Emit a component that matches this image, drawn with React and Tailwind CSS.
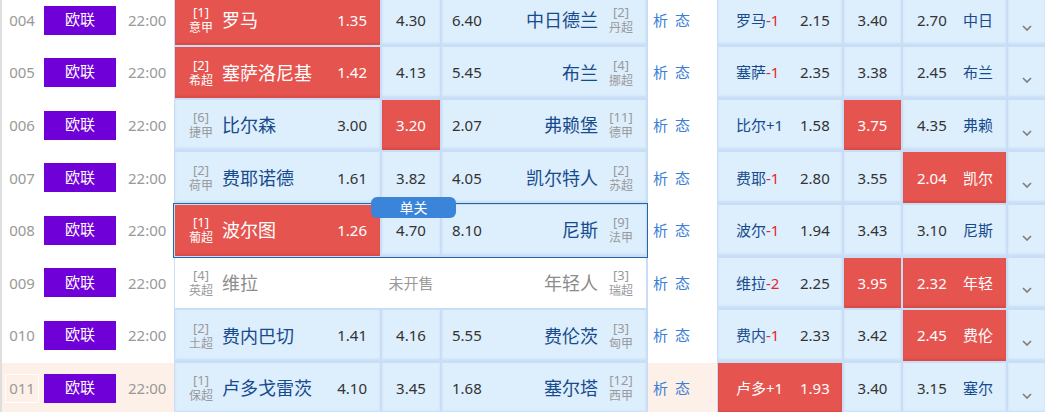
import React from "react";

const rows = [
  { no: "004", home: { rank: "[1]", lg: "意甲", name: "罗马", odds: "1.35" }, draw: "4.30", away: { odds: "6.40", name: "中日德兰", rank: "[2]", lg: "丹超" }, hl: "home",
    hc: { name: "罗马", h: "-1", odds: "2.15", draw: "3.40", aodds: "2.70", aname: "中日", hl: null } },
  { no: "005", home: { rank: "[2]", lg: "希超", name: "塞萨洛尼基", odds: "1.42" }, draw: "4.13", away: { odds: "5.45", name: "布兰", rank: "[4]", lg: "挪超" }, hl: "home",
    hc: { name: "塞萨", h: "-1", odds: "2.35", draw: "3.38", aodds: "2.45", aname: "布兰", hl: null } },
  { no: "006", home: { rank: "[6]", lg: "捷甲", name: "比尔森", odds: "3.00" }, draw: "3.20", away: { odds: "2.07", name: "弗赖堡", rank: "[11]", lg: "德甲" }, hl: "draw",
    hc: { name: "比尔", h: "+1", odds: "1.58", draw: "3.75", aodds: "4.35", aname: "弗赖", hl: "draw" } },
  { no: "007", home: { rank: "[2]", lg: "荷甲", name: "费耶诺德", odds: "1.61" }, draw: "3.82", away: { odds: "4.05", name: "凯尔特人", rank: "[2]", lg: "苏超" }, hl: null,
    hc: { name: "费耶", h: "-1", odds: "2.80", draw: "3.55", aodds: "2.04", aname: "凯尔", hl: "away" } },
  { no: "008", home: { rank: "[1]", lg: "葡超", name: "波尔图", odds: "1.26" }, draw: "4.70", away: { odds: "8.10", name: "尼斯", rank: "[9]", lg: "法甲" }, hl: "home", selected: true,
    hc: { name: "波尔", h: "-1", odds: "1.94", draw: "3.43", aodds: "3.10", aname: "尼斯", hl: null } },
  { no: "009", home: { rank: "[4]", lg: "英超", name: "维拉", odds: "" }, draw: "未开售", away: { odds: "", name: "年轻人", rank: "[3]", lg: "瑞超" }, hl: null, closed: true,
    hc: { name: "维拉", h: "-2", odds: "2.25", draw: "3.95", aodds: "2.32", aname: "年轻", hl: "drawaway" } },
  { no: "010", home: { rank: "[2]", lg: "土超", name: "费内巴切", odds: "1.41" }, draw: "4.16", away: { odds: "5.55", name: "费伦茨", rank: "[3]", lg: "匈甲" }, hl: null,
    hc: { name: "费内", h: "-1", odds: "2.33", draw: "3.42", aodds: "2.45", aname: "费伦", hl: "away" } },
  { no: "011", home: { rank: "[1]", lg: "保超", name: "卢多戈雷茨", odds: "4.10" }, draw: "3.45", away: { odds: "1.68", name: "塞尔塔", rank: "[12]", lg: "西甲" }, hl: null, peach: true,
    hc: { name: "卢多", h: "+1", odds: "1.93", draw: "3.40", aodds: "3.15", aname: "塞尔", hl: "home" } },
];

function Rank({ rank, lg, on }) {
  return (
    <div className={`flex w-[26px] shrink-0 flex-col items-center ${on ? "text-white" : "text-[#9a9a9a]"}`}>
      <span className="text-[13px] leading-[15px]">{rank}</span>
      <span className="text-[12px] leading-[15px]">{lg}</span>
    </div>
  );
}

function Chevron() {
  return (
    <svg width="10" height="6" viewBox="0 0 10 6">
      <path d="M1 1l4 4 4-4" stroke="#808080" strokeWidth="1.7" fill="none" />
    </svg>
  );
}

const blueCell = "bg-[#ddeefd] shadow-[inset_0_-2px_2px_rgba(140,180,225,0.25)]";
const redCell = "bg-[#e5544f] text-white shadow-[inset_0_-2px_2px_rgba(150,30,30,0.15)]";

function Row({ r }) {
  const homeOn = r.hl === "home";
  const drawOn = r.hl === "draw";
  const awayOn = r.hl === "away";
  const hc = r.hc;
  const hHome = hc.hl === "home";
  const hDraw = hc.hl === "draw" || hc.hl === "drawaway";
  const hAway = hc.hl === "away" || hc.hl === "drawaway";
  const sideBg = r.peach ? "bg-[#fdf0e8]" : "bg-white";
  const closed = r.closed;
  const cellCls = (on) => (closed ? "bg-white" : on ? redCell : blueCell);
  const nameCls = (on) => (closed ? "text-[#8c8c8c]" : on ? "text-white" : "text-[#174b8c]");
  const oddsCls = (on) => (on ? "text-white" : "text-[#333]");

  return (
    <div className="flex h-[52.6px] shrink-0">
      {/* left column */}
      <div className={`flex w-[174px] shrink-0 items-center border-l-2 border-[#dedede] pb-[2px] pl-[3px] ${sideBg}`}>
        <div className={`flex h-[29px] w-[34px] items-center justify-center text-[15px] text-[#999] ${r.peach ? "border border-white" : ""}`}>
          {r.no}
        </div>
        <div className="ml-[5px] flex h-[29px] w-[72px] items-center justify-center bg-[#7000d8] pb-[2px] text-[15px] text-white">
          欧联
        </div>
        <div className="ml-[12px] text-[15px] text-[#999]">22:00</div>
      </div>

      {/* main odds block */}
      <div className="relative z-10 w-[474px] shrink-0 bg-[#c9def6] pb-[2px] pl-[1px] pr-[2px]">
        <div className={`flex h-full gap-[2px] ${closed ? "bg-white" : ""} ${r.selected ? "outline outline-1 outline-offset-[1px] outline-[#2465a8]" : ""}`}>
          <div className={`flex w-[205px] shrink-0 items-center pl-[13px] pr-[13px] ${cellCls(homeOn)}`}>
            <Rank rank={r.home.rank} lg={r.home.lg} on={homeOn} />
            <span className={`ml-[8px] text-[18px] leading-[24px] ${nameCls(homeOn)}`}>{r.home.name}</span>
            <span className={`ml-auto text-[15px] ${oddsCls(homeOn)}`}>{r.home.odds}</span>
          </div>
          <div className={`flex w-[58px] shrink-0 items-center justify-center whitespace-nowrap text-[15px] ${cellCls(drawOn)} ${closed ? "text-[#999]" : oddsCls(drawOn)}`}>
            {r.draw}
          </div>
          <div className={`flex w-[204px] shrink-0 items-center pl-[10px] pr-[12px] ${cellCls(awayOn)}`}>
            <span className={`text-[15px] ${oddsCls(awayOn)}`}>{r.away.odds}</span>
            <span className={`ml-auto text-[18px] leading-[24px] ${nameCls(awayOn)}`}>{r.away.name}</span>
            <div className="ml-[10px]">
              <Rank rank={r.away.rank} lg={r.away.lg} on={awayOn} />
            </div>
          </div>
        </div>
        {r.selected && (
          <div className="absolute left-[197px] top-[-8px] flex h-[21px] w-[85px] items-center justify-center rounded-[6px] bg-[#3a84da] text-[14px] leading-none text-white">
            单关
          </div>
        )}
      </div>

      {/* analysis */}
      <div className={`flex w-[69px] shrink-0 items-center pb-[2px] pl-[5px] text-[15px] text-[#3d7fd6] ${sideBg}`}>
        <span>析</span>
        <span className="ml-[7px]">态</span>
      </div>

      {/* handicap block */}
      <div className="flex w-[328px] shrink-0 gap-[2px] bg-[#c9def6] pb-[2px] pl-[1px]">
        <div className={`flex w-[124px] shrink-0 items-center pl-[18px] text-[15px] ${hHome ? redCell : blueCell}`}>
          <span className={`w-[64px] whitespace-nowrap ${hHome ? "text-white" : "text-[#174b8c]"}`}>
            {hc.name}
            <span className={hHome ? "text-white" : hc.h.startsWith("-") ? "text-[#e8262a]" : "text-[#174b8c]"}>{hc.h}</span>
          </span>
          <span className={oddsCls(hHome)}>{hc.odds}</span>
        </div>
        <div className={`flex w-[57px] shrink-0 items-center justify-center text-[15px] ${hDraw ? redCell : blueCell} ${oddsCls(hDraw)}`}>
          {hc.draw}
        </div>
        <div className={`flex w-[103px] shrink-0 items-center pl-[14px] text-[15px] ${hAway ? redCell : blueCell}`}>
          <span className={`w-[46px] ${oddsCls(hAway)}`}>{hc.aodds}</span>
          <span className={hAway ? "text-white" : "text-[#174b8c]"}>{hc.aname}</span>
        </div>
        <div className={`flex w-[37px] shrink-0 items-center justify-center pt-[15px] ${blueCell}`}>
          <Chevron />
        </div>
      </div>
    </div>
  );
}

export default function App() {
  return (
    <div className="h-[412px] w-[1045px] overflow-hidden bg-white font-['Noto_Sans','Noto_Sans_CJK_SC',sans-serif]">
      <div className="-mt-[5.3px] flex flex-col">
        {rows.map((r) => (
          <Row key={r.no} r={r} />
        ))}
      </div>
    </div>
  );
}
